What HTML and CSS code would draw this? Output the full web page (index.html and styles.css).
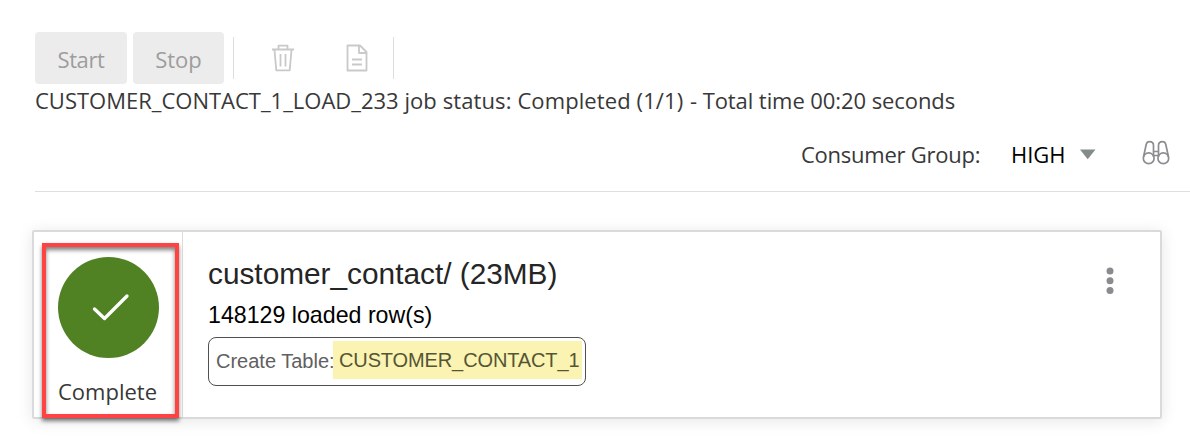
FILE: index.html
```html
<!DOCTYPE html>
<html lang="en">
<head>
<meta charset="utf-8">
<title>Data Load</title>
<link rel="stylesheet" href="styles.css">
</head>
<body>
<header class="header">
  <div class="toolbar">
    <button class="btn btn-start" disabled><span class="t-start">Start</span></button>
    <button class="btn btn-stop" disabled><span class="t-stop">Stop</span></button>
    <div class="tools">
      <svg class="icon-trash" width="24" height="28" viewBox="0 0 24 28"><path d="M1 5.500H23M7.500 5V1.700H16.500V5M3.500 6L5.300 26.300H18.700L20.500 6M9.500 10V22.500M14.500 10V22.500"/></svg>
      <svg class="icon-doc" width="22" height="28" viewBox="0 0 22 28"><path d="M1.500 1.500H14L20.500 8V26.500H1.500ZM13 2V9H20M6 15.500H16M6 20.500H16"/></svg>
    </div>
  </div>
  <div class="job"><span class="t-job">CUSTOMER_CONTACT_1_LOAD_233</span> <span class="t-job-status">job status: Completed (1/1)</span> <span class="t-job-time">- Total time 00:20 seconds</span></div>
  <div class="group-row">
    <span class="t-group">Consumer Group:</span>
    <span class="t-high">HIGH</span>
    <svg class="caret" width="16" height="11" viewBox="0 0 16 11"><path d="M0 .5H15.500L7.700 10.300Z"/></svg>
    <svg class="binoculars" width="28" height="26" viewBox="0 0 28 26"><path d="M1.500 17L4.200 4.500Q4.900 1.700 7.500 1.700Q11.500 1.700 11.500 5.500V17M26.500 17L23.800 4.500Q23.100 1.700 20.500 1.700Q16.500 1.700 16.500 5.500V17M11.500 11.500H16.500M11.500 15.500H16.500"/><circle cx="6.700" cy="18.300" r="5.400"/><circle cx="21.300" cy="18.300" r="5.400"/></svg>
  </div>
</header>
<main class="card">
  <section class="status">
    <div class="highlight">
      <div class="disc"><svg width="101" height="101" viewBox="0 0 101 101"><path d="M36.500 52L46.500 61.500L69 39"/></svg></div>
      <span class="t-complete">Complete</span>
    </div>
  </section>
  <section class="details">
    <h1 class="title"><span class="t-title">customer_contact/ (23MB)</span></h1>
    <p class="rows"><span class="t-rows">148129 loaded row(s)</span></p>
    <div class="target"><span class="t-create">Create Table:</span><span class="mark"><span class="t-table">CUSTOMER_CONTACT_1</span></span></div>
  </section>
  <svg class="more" width="8" height="28" viewBox="0 0 8 28"><circle cx="4" cy="4" r="3.500"/><circle cx="4" cy="13.700" r="3.500"/><circle cx="4" cy="23.500" r="3.500"/></svg>
</main>
</body>
</html>
```
FILE: styles.css
```css
* { box-sizing: border-box; }
body { margin: 0; height: 436px; overflow: hidden; background: #fff; color: #383838; font: 22px/30px "Open Sans", sans-serif; }
span { white-space: nowrap; }
svg { display: block; flex: none; fill: none; stroke-linejoin: round; }
.header { margin-left: 35px; padding-top: 32px; height: 192px; border-bottom: 1px solid #dedede; }
.toolbar { display: flex; height: 52px; gap: 6px; }
.btn { border: 0; border-radius: 4px; padding: 2px 0 0; background: #ececec; color: #9d9d9d; font: inherit; }
.btn-start { width: 92px; letter-spacing: -.4px; }
.btn-stop { width: 91px; }
.tools { display: flex; margin: 5px 0 0 3px; width: 161px; height: 42px; border: solid #dedede; border-width: 0 1px; padding: 7px 0 0 37px; gap: 51px; }
.tools svg { stroke: #c9c9c9; stroke-width: 1.800; }
.job { height: 34px; padding-top: 1px; white-space: nowrap; }
.t-job-status { letter-spacing: .1px; }
.t-job-time { letter-spacing: -.08px; margin-left: 1px; }
.group-row { display: flex; align-items: flex-start; padding: 21px 0 0 766px; }
.t-group { width: 210px; letter-spacing: -.25px; }
.t-high { width: 70px; color: #000; }
.caret { fill: #858a8b; margin-top: 10px; margin-left: -1px; }
.binoculars { stroke: #8b8d90; stroke-width: 1.700; margin: 1px 0 0 46px; }
.card { display: flex; margin: 38px 0 0 32px; width: 1130px; height: 189px; border: 2px solid #d9dada; border-radius: 2px; box-shadow: 0 2px 16px rgba(0,0,0,.1); }
.status { width: 149px; border-right: 1px solid #dedede; padding: 11px 0 0 8px; }
.highlight { width: 137px; height: 175px; border: 4px solid #ff4343; box-shadow: 0 3px 4px rgba(0,0,0,.5), inset 0 3px 4px rgba(0,0,0,.5); padding: 10px 0 0 12px; }
.disc { width: 101px; height: 101px; border-radius: 50%; background: #508223; margin-bottom: 18px; }
.disc svg { stroke: #fff; stroke-width: 3.300; stroke-linecap: round; }
.details { width: 892px; padding: 25px 0 0 25px; font-family: "Liberation Sans", Arial, sans-serif; }
.title { margin: 0; font-size: 29.800px; font-weight: 400; line-height: 34px; color: #252525; }
.rows { margin: 9px 0 7px; font-size: 23.200px; line-height: 30px; color: #000; }
.target { display: flex; align-items: center; width: 378px; height: 49px; border: 1px solid #505050; border-radius: 8px; padding-left: 7px; font-size: 20px; color: #606060; }
.t-create { width: 117px; margin-top: -2px; }
.mark { width: 249px; height: 38px; padding: 4px 0 0 6px; background: #faf3b2; color: #555536; margin-top: -3px; letter-spacing: -.12px; }
.more { fill: #898b8f; margin-top: 35px; margin-left: 31px; }
```
